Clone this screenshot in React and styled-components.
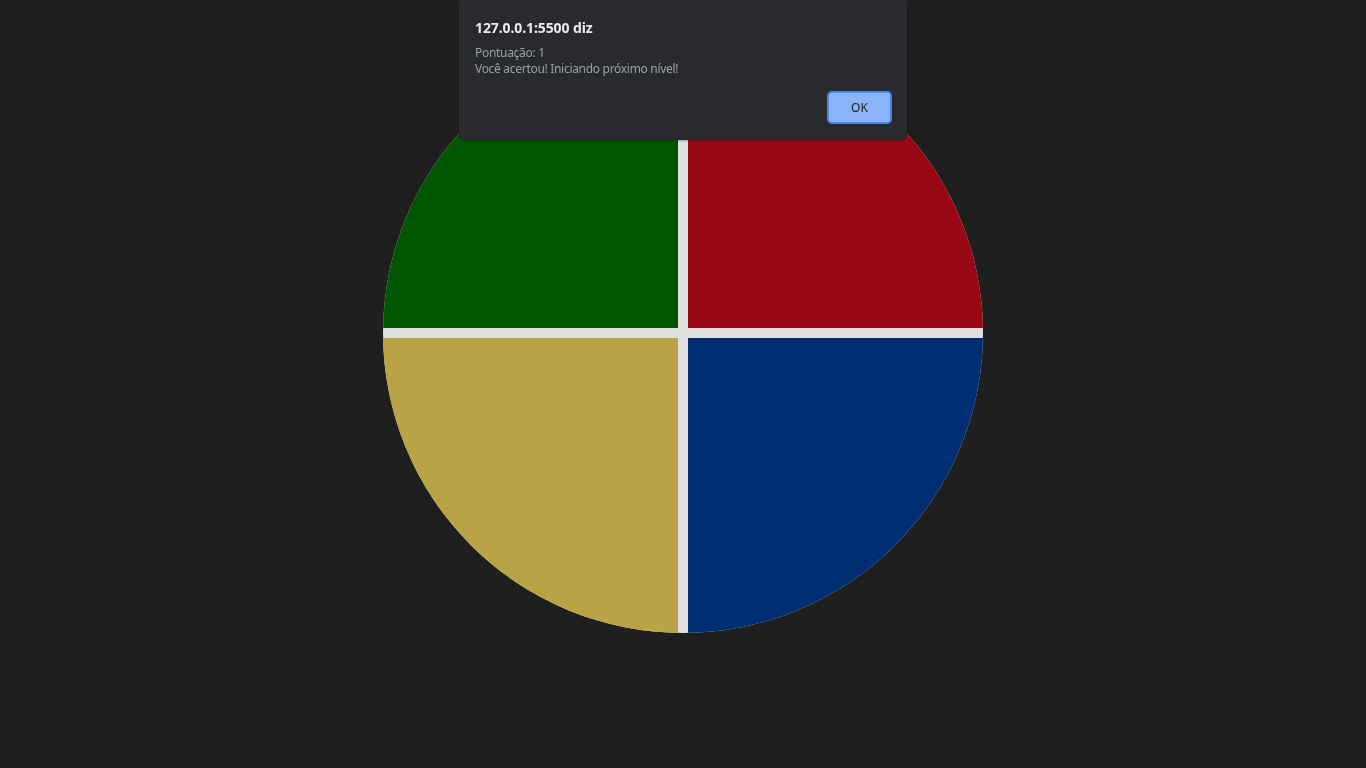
import styled, { createGlobalStyle } from 'styled-components';

const GlobalStyle = createGlobalStyle`
  html,
  body {
    margin: 0;
    padding: 0;
    background-color: #1f1f1f;
    font-family: 'Noto Sans', 'Open Sans', sans-serif;
  }
`;

const Page = styled.main`
  display: flex;
  justify-content: center;
  padding-top: 33px;
  height: 768px;
  box-sizing: border-box;
`;

const Board = styled.div`
  display: grid;
  grid-template-columns: 1fr 1fr;
  grid-template-rows: 1fr 1fr;
  gap: 10px;
  width: 600px;
  height: 600px;
  border-radius: 50%;
  overflow: hidden;
  background-color: #e0e0e0;
`;

const Pad = styled.div`
  background-color: ${props => props.color};
`;

const Dialog = styled.div`
  position: fixed;
  top: 0;
  left: 459px;
  width: 448px;
  height: 140px;
  box-sizing: border-box;
  padding: 18px 16px 16px;
  background-color: #292a2d;
  border-radius: 0 0 6px 6px;
  box-shadow: 0 1px 2px rgba(0, 0, 0, 0.3);
  display: flex;
  flex-direction: column;
`;

const DialogTitle = styled.h2`
  margin: 0 0 7px;
  font-size: 14px;
  font-weight: 700;
  line-height: 20px;
  letter-spacing: -0.1px;
  color: #e8eaed;
`;

const DialogText = styled.p`
  margin: 0;
  font-size: 12px;
  line-height: 16px;
  letter-spacing: -0.3px;
  color: #9aa0a6;
`;

const Actions = styled.div`
  display: flex;
  justify-content: flex-end;
  margin-top: auto;
`;

const OkButton = styled.button`
  font-family: inherit;
  font-size: 12px;
  color: #202124;
  background-color: #8ab4f8;
  border: 2px solid #4a86e8;
  border-radius: 5px;
  width: 65px;
  height: 33px;
  margin-right: -1px;
  margin-bottom: 0;
  cursor: pointer;
`;

const pads = ['#005500', '#990613', '#b9a345', '#002e73'];

export default function App() {
  return (
    <>
      <GlobalStyle />
      <Page>
        <Board>
          {pads.map(color => (
            <Pad key={color} color={color} />
          ))}
        </Board>
      </Page>
      <Dialog>
        <DialogTitle>127.0.0.1:5500 diz</DialogTitle>
        <DialogText>
          Pontuação: 1
          <br />
          Você acertou! Iniciando próximo nível!
        </DialogText>
        <Actions>
          <OkButton>OK</OkButton>
        </Actions>
      </Dialog>
    </>
  );
}
